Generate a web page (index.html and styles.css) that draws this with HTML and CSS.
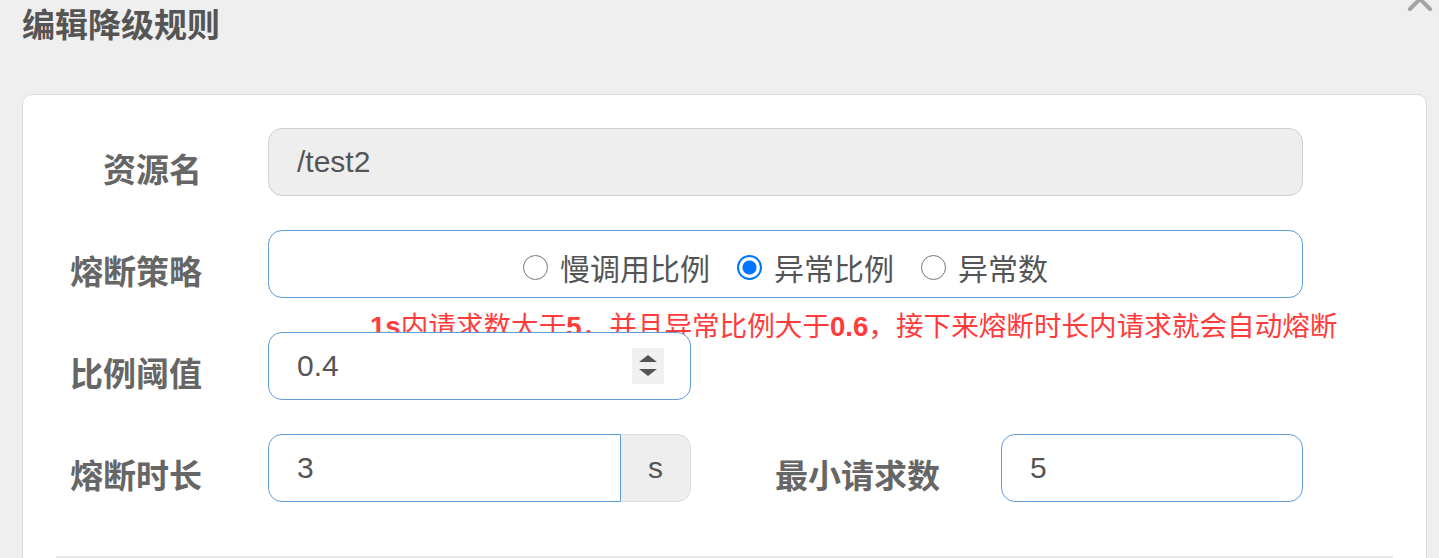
FILE: index.html
```html
<!DOCTYPE html>
<html lang="zh-CN">
<head>
  <meta charset="UTF-8">
  <title>编辑降级规则</title>
  <link rel="stylesheet" href="styles.css">
</head>
<body>
  <div class="modal">
    <div class="modal-header">
      <h3 class="modal-title">编辑降级规则</h3>
      <span class="close">
        <svg width="26" height="26" viewBox="0 0 26 26"><path d="M3 3 L23 23 M23 3 L3 23" stroke="#a3a3a3" stroke-width="4" stroke-linecap="round"/></svg>
      </span>
    </div>

    <div class="panel">
      <form class="form">
        <div class="row">
          <label class="label">资源名</label>
          <div class="control wide">
            <input class="input" type="text" value="/test2" disabled>
          </div>
        </div>

        <div class="row">
          <label class="label">熔断策略</label>
          <div class="control wide">
            <div class="input radios">
              <label class="radio"><input type="radio" name="grade">慢调用比例</label>
              <label class="radio"><input type="radio" name="grade" checked>异常比例</label>
              <label class="radio"><input type="radio" name="grade">异常数</label>
            </div>
            <p class="help"><b>1s</b>内请求数大于<b>5</b>，并且异常比例大于<b>0.6</b>，接下来熔断时长内请求就会自动熔断</p>
          </div>
        </div>

        <div class="row">
          <label class="label">比例阈值</label>
          <div class="control narrow">
            <div class="input number">
              <input class="bare" type="text" value="0.4">
              <span class="spin">
                <svg width="20" height="24" viewBox="0 0 20 24"><path d="M1 8 L10 1 L19 8 Z M1 15 L10 22 L19 15 Z" fill="#555"/></svg>
              </span>
            </div>
          </div>
        </div>

        <div class="row">
          <label class="label">熔断时长</label>
          <div class="control narrow group">
            <input class="input" type="text" value="3">
            <span class="addon">s</span>
          </div>
          <label class="label label-mid">最小请求数</label>
          <div class="control mid">
            <input class="input" type="text" value="5">
          </div>
        </div>
      </form>
      <hr class="divider">
    </div>
  </div>
</body>
</html>
```

FILE: styles.css
```css
body {
  margin: 0;
  background: #efefef;
  font-family: "Liberation Sans", "Noto Sans CJK SC", sans-serif;
  overflow: hidden;
}

.modal-header {
  position: relative;
  padding: 1px 0 0 22px;
  height: 94px;
  box-sizing: border-box;
}

.modal-title {
  margin: 0;
  font-family: "Noto Sans CJK SC", sans-serif;
  font-size: 33px;
  line-height: 44px;
  font-weight: bold;
  color: #555;
}

.close {
  position: absolute;
  top: -14px;
  right: 6px;
}

.panel {
  margin-left: 22px;
  width: 1405px;
  height: 520px;
  box-sizing: border-box;
  background: #fff;
  border: 1px solid #dcdcdc;
  border-radius: 10px;
  padding-top: 33px;
}

.form {
  display: flex;
  flex-direction: column;
  gap: 34px;
}

.row {
  display: flex;
  align-items: center;
}

.label {
  width: 179px;
  margin-right: 66px;
  padding-top: 11px;
  text-align: right;
  font-family: "Noto Sans CJK SC", sans-serif;
  font-size: 33px;
  font-weight: bold;
  color: #666;
}

.label-mid {
  width: 249px;
  margin-right: 61px;
}

.control {
  position: relative;
}

.wide { width: 1035px; }
.narrow { width: 423px; }
.mid { width: 302px; }

.input {
  display: block;
  width: 100%;
  height: 68px;
  box-sizing: border-box;
  padding: 0 28px;
  border: 1px solid #5d9cd8;
  border-radius: 14px;
  background: #fff;
  font-family: "Liberation Sans", sans-serif;
  font-size: 30px;
  color: #555;
  outline: none;
}

.input:disabled {
  background: #eee;
  border-color: #cfcfcf;
  color: #555;
}

.radios {
  display: flex;
  align-items: center;
  justify-content: center;
  gap: 27px;
  padding-top: 6px;
}

.radio {
  display: flex;
  align-items: center;
  font-family: "Noto Sans CJK SC", sans-serif;
  font-size: 30px;
  color: #555;
}

.radio input {
  appearance: none;
  width: 25px;
  height: 25px;
  margin: 0 12px 0 0;
  border: 1.5px solid #767676;
  border-radius: 50%;
  box-sizing: border-box;
}

.radio input:checked {
  border: 2px solid #0075ff;
  background: radial-gradient(circle, #0075ff 0, #0075ff 6.5px, #fff 7.5px);
}

.help {
  position: absolute;
  top: 100%;
  left: 102px;
  margin: 12px 0 0;
  white-space: nowrap;
  font-family: "Noto Sans CJK SC", sans-serif;
  font-size: 27.6px;
  line-height: 28px;
  color: #ff3b3b;
}

.help b {
  font-family: "Liberation Sans", sans-serif;
}

.number {
  display: flex;
  align-items: center;
  padding-right: 26px;
}

.bare {
  flex: 1;
  min-width: 0;
  border: none;
  padding: 0;
  font: inherit;
  color: inherit;
  outline: none;
}

.spin {
  display: flex;
  align-items: center;
  justify-content: center;
  width: 32px;
  height: 36px;
  background: #f0f0f0;
}

.group {
  display: flex;
}

.group .input {
  flex: 1;
  border-radius: 14px 0 0 14px;
}

.addon {
  display: flex;
  align-items: center;
  justify-content: center;
  width: 70px;
  height: 68px;
  box-sizing: border-box;
  background: #eee;
  border: 1px solid #ddd;
  border-left: none;
  border-radius: 0 14px 14px 0;
  font-size: 30px;
  color: #555;
}

.divider {
  margin: 54px 33px 0;
  border: none;
  border-top: 2px solid #e8e8e8;
}
```
